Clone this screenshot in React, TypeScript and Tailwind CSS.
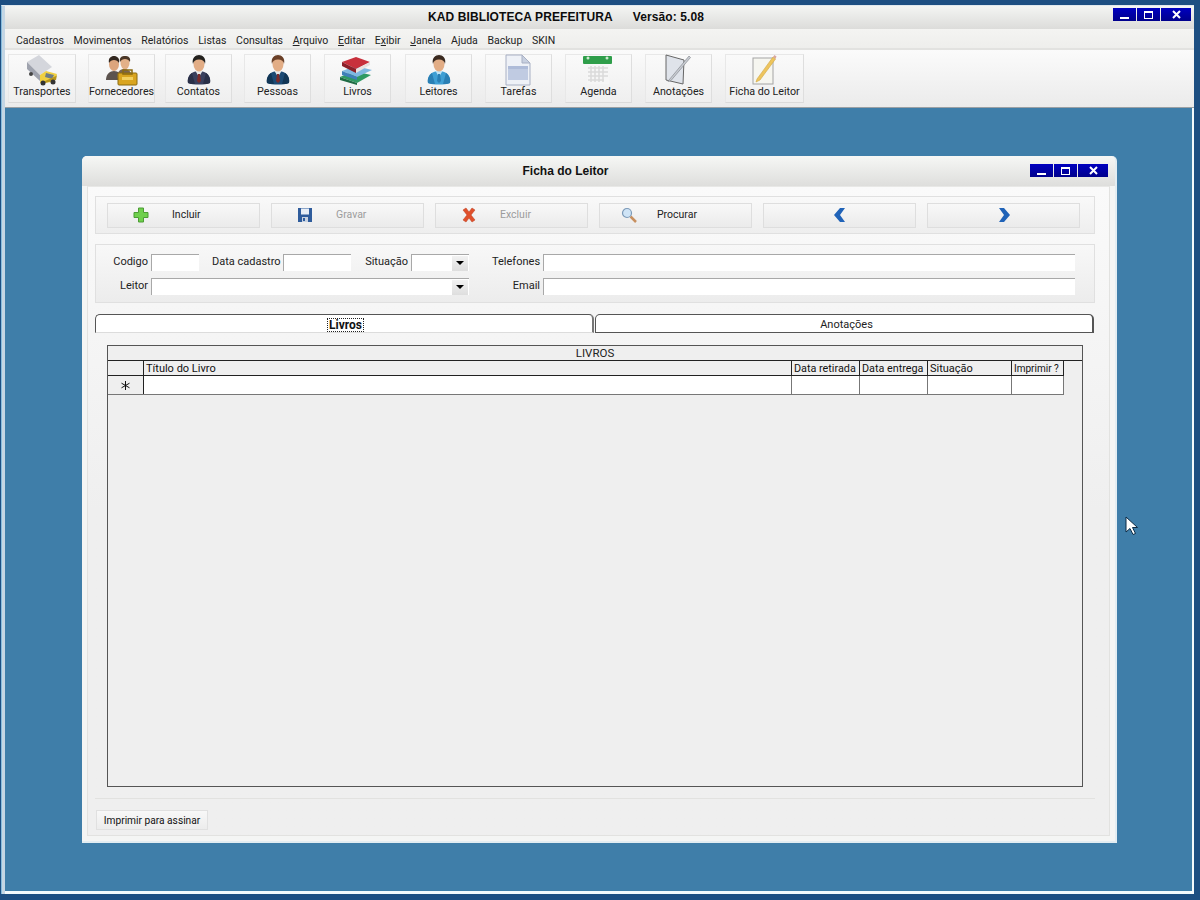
import React from 'react';

const WinButtons = () => (
  <div className="flex gap-px">
    <div className="w-[23px] h-[13px] bg-gradient-to-b from-[#0000c0] to-[#00008c] flex items-end justify-center pb-[2px]">
      <div className="w-[9px] h-[2px] bg-white" />
    </div>
    <div className="w-[23px] h-[13px] bg-gradient-to-b from-[#0000c0] to-[#00008c] flex items-center justify-center">
      <div className="w-[9px] h-[8px] border border-white border-t-2" />
    </div>
    <div className="w-[30px] h-[13px] bg-gradient-to-b from-[#0000c0] to-[#00008c] flex items-center justify-center">
      <svg width="9" height="9" viewBox="0 0 9 9">
        <path d="M1 1l7 7M8 1L1 8" stroke="#fff" strokeWidth="2" />
      </svg>
    </div>
  </div>
);

const Person = ({ suit, dark, hair, skin = '#e2ad86', collar = '#e8e8e8', tie = '#7a2a2a' }: { suit: string; dark: string; hair: string; skin?: string; collar?: string; tie?: string }) => (
  <svg width="26" height="32" viewBox="2 0 26 32">
    <path d="M4 29c-1-7 3-12 11-12s12 5 11 12c-5 2-17 2-22 0z" fill={suit} />
    <path d="M4 29c-1-4 1-8 4-10l3 11c-3 0-5 0-7-1zM26 29c1-4-1-8-4-10l-3 11c3 0 5 0 7-1z" fill={dark} />
    <path d="M11.500 17l3.500 6 3.500-6z" fill={collar} />
    <path d="M14 20h2l1 7-2 2-2-2z" fill={tie} />
    <ellipse cx="15" cy="10" rx="5.500" ry="7.500" fill={skin} />
    <path d="M9 10c-1.500-6 2.500-9 6-9s7.500 3 6 9c-.5-3-2.500-4.500-6-4.500S9.500 7 9 10z" fill={hair} />
  </svg>
);

const TruckIcon = () => (
  <svg width="34" height="32" viewBox="0 0 34 32">
    <path d="M2 8l12-7 13 12-12 8z" fill="#d4d6dc" />
    <path d="M2 8l13 13v6L2 15z" fill="#9fa3ae" />
    <path d="M15 21l6-4 11 3-3 8-14 1z" fill="#f0d040" />
    <path d="M21 19l8 2-2 4-7-2z" fill="#6f7d86" />
    <path d="M20 29l11-3 1-5-1 1-11 5z" fill="#b8961c" />
    <circle cx="18" cy="29" r="2.500" fill="#333" />
    <circle cx="28" cy="28" r="2.500" fill="#333" />
    <circle cx="6" cy="20" r="2" fill="#444" />
  </svg>
);

const SuppliersIcon = () => (
  <svg width="32" height="32" viewBox="1 0 32 32">
    <path d="M1 26c0-6 4-9 8-9s8 3 8 9z" fill="#5c534e" />
    <ellipse cx="9" cy="10" rx="5" ry="7" fill="#dca57d" />
    <path d="M4 9c-1-5 2-7 5-7s6 2 5 7c-1-2-3-3-5-3s-4 1-5 3z" fill="#332820" />
    <path d="M12 24c0-6 3-9 7-9s7 2 8 7z" fill="#7a6450" />
    <ellipse cx="20" cy="9" rx="4.500" ry="6.500" fill="#e3b088" />
    <path d="M15 8c-1-5 2-6 5-6s6 1 5 6c-1-2-3-3-5-3s-4 1-5 3z" fill="#4a3626" />
    <rect x="13" y="19" width="19" height="12" rx="1" fill="#d9a520" stroke="#8a6a10" />
    <rect x="18" y="16" width="9" height="4" fill="none" stroke="#8a6a10" strokeWidth="1.500" />
    <rect x="17" y="23" width="11" height="3" fill="#f2d060" />
  </svg>
);

const BooksIcon = () => (
  <svg width="34" height="32" viewBox="0 0 34 32" className="-ml-[3px]">
    <path d="M1 23l14-6 17 4-14 8z" fill="#2f9a63" />
    <path d="M1 23l17 6v2L1 26z" fill="#1f6b44" />
    <path d="M3 17l14-5 16 4-15 7z" fill="#7fb8e0" />
    <path d="M3 17l15 6v3L3 21z" fill="#3f7fb8" />
    <path d="M3 8l14-5 14 5-14 7z" fill="#c8303c" />
    <path d="M3 8l14 7v4L3 12z" fill="#8c1f28" />
    <path d="M17 15l14-7v3l-14 8z" fill="#e8e2e0" />
  </svg>
);

const TasksIcon = () => (
  <svg width="26" height="32" viewBox="0 0 26 32" className="-ml-[2px]">
    <path d="M1 1h16l8 8v22H1z" fill="#eef1f7" stroke="#a8b0c4" />
    <path d="M17 1v8h8z" fill="#c8d0e0" stroke="#a8b0c4" />
    <rect x="3" y="12" width="20" height="14" fill="#c0cbe2" />
    <rect x="3" y="12" width="20" height="3" fill="#aebbd8" />
  </svg>
);

const CalendarIcon = () => (
  <svg width="34" height="32" viewBox="0 0 34 32" className="-ml-[2px]">
    <rect x="2" y="2" width="29" height="8" rx="1" fill="#2f9e4a" />
    <circle cx="7" cy="4" r="1.500" fill="#cfe8d0" />
    <circle cx="26" cy="4" r="1.500" fill="#cfe8d0" />
    <rect x="6" y="11" width="22" height="19" fill="#f6f6f6" />
    <path
      d="M7 14h20M7 18h20M7 22h20M7 26h16M10 12v16M14 12v16M18 12v16M22 12v16"
      stroke="#dadada"
      strokeWidth="1.500"
    />
  </svg>
);

const NotesIcon = () => (
  <svg width="34" height="32" viewBox="0 0 34 32" className="-ml-[5px]">
    <path d="M7 1l18 5-1 24-17-4z" fill="#dfe3ea" stroke="#666" />
    <path d="M10 26L30 2l1.500 1.500L12 26.500l-3 1z" fill="#c8ccd2" stroke="#7a7e84" strokeWidth="0.600" />
  </svg>
);

const PencilNoteIcon = () => (
  <svg width="34" height="32" viewBox="0 0 34 32">
    <rect x="5" y="4" width="20" height="26" fill="#f6f6f0" stroke="#a4a4a4" />
    <path d="M9 25L25 3l2.500 2L12 26l-4 2z" fill="#eec55c" stroke="#d0a640" strokeWidth="0.600" />
    <path d="M25 3l2.500 2 1-2.500-2-1.500z" fill="#d8a8a0" />
  </svg>
);

const tools = [
  { label: 'Transportes', icon: <TruckIcon />, cls: 'w-[68px]' },
  { label: 'Fornecedores', icon: <SuppliersIcon />, cls: 'w-[67px] ml-[12px]' },
  { label: 'Contatos', icon: <Person suit="#39405e" dark="#2a3048" hair="#24221f" />, cls: 'w-[67px] ml-[10px]' },
  { label: 'Pessoas', icon: <Person suit="#1c4a74" dark="#123656" hair="#6a4028" />, cls: 'w-[67px] ml-[12px]' },
  { label: 'Livros', icon: <BooksIcon />, cls: 'w-[67px] ml-[13px]' },
  { label: 'Leitores', icon: <Person suit="#3f9fd4" dark="#2a7fb4" hair="#3a2a20" collar="#bfe3f5" tie="#2a7fb4" />, cls: 'w-[67px] ml-[14px]' },
  { label: 'Tarefas', icon: <TasksIcon />, cls: 'w-[67px] ml-[13px]' },
  { label: 'Agenda', icon: <CalendarIcon />, cls: 'w-[67px] ml-[13px]' },
  { label: 'Anotações', icon: <NotesIcon />, cls: 'w-[67px] ml-[13px]' },
  { label: 'Ficha do Leitor', icon: <PencilNoteIcon />, cls: 'w-[79px] ml-[13px]' },
];

const actions = [
  {
    label: 'Incluir',
    on: true,
    iconCls: 'ml-[25px]',
    labelCls: 'ml-[23px]',
    icon: (
      <svg width="16" height="16" viewBox="0 0 16 16">
        <path d="M5.500 1h5v4.500H15v5h-4.500V15h-5v-4.500H1v-5h4.500z" fill="#6fd04c" stroke="#4c9c34" />
      </svg>
    ),
  },
  {
    label: 'Gravar',
    on: false,
    iconCls: 'ml-[25px]',
    labelCls: 'ml-[23px]',
    icon: (
      <svg width="16" height="16" viewBox="0 0 16 16">
        <path d="M1 1h14v14H1z" fill="#2f5c9c" />
        <rect x="4" y="1.500" width="8" height="6" fill="#e8eef6" />
        <rect x="5" y="10" width="6" height="5" fill="#c8d2e0" />
        <rect x="6" y="11" width="2" height="3" fill="#2f5c9c" />
      </svg>
    ),
  },
  {
    label: 'Excluir',
    on: false,
    iconCls: 'ml-[25px]',
    labelCls: 'ml-[23px]',
    icon: (
      <svg width="16" height="16" viewBox="0 0 16 16">
        <path d="M2 3l3-2 3 4 3-4 3 2-4 5 4 5-3 2-3-4-3 4-3-2 4-5z" fill="#e0502c" stroke="#b83c1c" strokeWidth="0.500" />
      </svg>
    ),
  },
  {
    label: 'Procurar',
    on: true,
    iconCls: 'ml-[21px]',
    labelCls: 'ml-[20px]',
    icon: (
      <svg width="16" height="16" viewBox="0 0 16 16">
        <path d="M9.500 9.500L15 15" stroke="#c89060" strokeWidth="2.500" />
        <circle cx="6" cy="6" r="4.500" fill="#cfe4f6" stroke="#7c9ab8" strokeWidth="1.200" />
      </svg>
    ),
  },
];

const fieldInput = 'h-[17px] bg-white border-t border-l border-[#a8a8a8]';

const Arrow = () => (
  <div className="w-[16px] h-[15px] bg-gradient-to-b from-[#f2f2f2] to-[#dedede] flex items-center justify-center shrink-0 ml-auto mr-px">
    <div className="w-0 h-0 border-l-[4px] border-r-[4px] border-t-[4px] border-l-transparent border-r-transparent border-t-black" />
  </div>
);

const Cell = ({ w, children }: { w: string; children?: React.ReactNode }) => (
  <div className={`${w} shrink-0 pl-[2px] leading-[15px] border-r border-[#222]`}>{children}</div>
);

export default function App() {
  return (
    <div className="w-[1200px] h-[900px] overflow-hidden bg-[#1d4f82] pt-[5px] pr-[6px] pb-[6px] pl-[1px] font-['Roboto',sans-serif] text-[11px] text-[#111]">
      <div className="h-full flex flex-col bg-[#c4d6e4] pl-[3px] border-t border-[#e0e8ee] border-l border-l-[#86bbdc]">
        {/* titulo */}
        <div className="relative h-[23px] shrink-0 bg-gradient-to-b from-[#f4f5f3] to-[#dcdcda] flex items-center pl-[423px] pb-[2px]">
          <div className="flex gap-[20px] font-bold text-[12px] tracking-[0.1px] text-[#0c0c0c] font-['Liberation_Sans',sans-serif] whitespace-nowrap">
            <span>KAD BIBLIOTECA PREFEITURA</span>
            <span>Versão: 5.08</span>
          </div>
          <div className="absolute right-[3px] top-[2px]">
            <WinButtons />
          </div>
        </div>

        {/* menu */}
        <div className="h-[21px] shrink-0 bg-gradient-to-b from-[#f4f4f2] to-[#eeeeec] border-b-2 border-[#e2e2e0] flex items-center pl-[11px] pt-[4px] gap-[9.700px] text-[10.500px] text-[#222]">
          <span>Cadastros</span>
          <span>Movimentos</span>
          <span>Relatórios</span>
          <span>Listas</span>
          <span>Consultas</span>
          <span><u>A</u>rquivo</span>
          <span><u>E</u>ditar</span>
          <span>E<u>x</u>ibir</span>
          <span><u>J</u>anela</span>
          <span>Ajuda</span>
          <span>Backup</span>
          <span>SKIN</span>
        </div>

        {/* barra de icones */}
        <div className="h-[58px] shrink-0 bg-gradient-to-b from-[#fbfbfb] to-[#ebebeb] border-b border-[#9aa0a4] flex pl-[3px] pt-[4px]">
          {tools.map((t) => (
            <div
              key={t.label}
              className={`${t.cls} h-[49px] shrink-0 flex flex-col items-center bg-gradient-to-b from-[#fafafa] to-[#efefef] border border-[#e8e8e8] border-r-[#dedede] border-b-[#dadada]`}
            >
              <div className="h-[30px] flex items-center justify-center">{t.icon}</div>
              <span className="leading-[13px] whitespace-nowrap text-[10.700px] text-[#222]">{t.label}</span>
            </div>
          ))}
        </div>

        {/* area MDI */}
        <div className="relative flex-1 bg-[#3f7ea9] border-r-2 border-b-[3px] border-[#f4fafc]">
          <div className="absolute left-[77px] top-[48px] w-[1035px] h-[687px] flex flex-col rounded-t-[5px] bg-[#f4f5f4] border-b-2 border-r-2 border-[#e3edf2]">
            <div className="relative h-[30px] shrink-0 rounded-t-[5px] bg-gradient-to-b from-[#f6f7f5] to-[#dededc] flex items-center justify-center">
              <span className="font-bold text-[12px] text-[#111] ml-[-66px] font-['Liberation_Sans',sans-serif]">Ficha do Leitor</span>
              <div className="absolute right-[7px] top-[8px]">
                <WinButtons />
              </div>
            </div>

            <div className="flex-1 mx-[5px] mb-[5px] flex flex-col border border-[#e2e2e0] border-t-[#e8e8e6] bg-gradient-to-b from-[#fafafa] via-[#efefef] to-[#efefef] px-[7px] pt-[9px]">
              {/* acoes */}
              <div className="h-[38px] shrink-0 w-[1000px] border border-[#e0e0e0] bg-gradient-to-b from-[#f9f9f9] to-[#eeeeee] flex items-center pl-[11px] gap-[11px]">
                {actions.map((a) => (
                  <div
                    key={a.label}
                    className="relative w-[153px] h-[25px] shrink-0 border border-[#dedede] bg-gradient-to-b from-[#f8f8f8] to-[#ebebeb] flex items-center"
                  >
                    <div className={`${a.iconCls} w-[16px] h-[16px]`}>{a.icon}</div>
                    <span className={`${a.labelCls} text-[10.500px] ${a.on ? 'text-[#222]' : 'text-[#9c9c9c]'}`}>{a.label}</span>
                  </div>
                ))}
                <div className="w-[153px] h-[25px] shrink-0 border border-[#dedede] bg-gradient-to-b from-[#f8f8f8] to-[#ebebeb] flex items-center justify-center">
                  <svg width="12" height="14" viewBox="0 0 12 14">
                    <path d="M6 0L0 7l6 7h5L6 7l5-7z" fill="#2063b8" />
                  </svg>
                </div>
                <div className="w-[153px] h-[25px] shrink-0 border border-[#dedede] bg-gradient-to-b from-[#f8f8f8] to-[#ebebeb] flex items-center justify-center">
                  <svg width="12" height="14" viewBox="0 0 12 14">
                    <path d="M6 0l6 7-6 7H1l5-7-5-7z" fill="#2063b8" />
                  </svg>
                </div>
              </div>

              {/* campos */}
              <div className="mt-[10px] h-[59px] shrink-0 w-[1000px] border border-[#e0e0e0] bg-gradient-to-b from-[#f8f8f8] to-[#ececec] pt-[9px] text-[#222]">
                <div className="flex items-center h-[17px]">
                  <span className="w-[52px] text-right">Codigo</span>
                  <div className={`${fieldInput} w-[48px] ml-[3px]`} />
                  <span className="w-[68px] ml-[13px] text-right whitespace-nowrap">Data cadastro</span>
                  <div className={`${fieldInput} w-[68px] ml-[3px]`} />
                  <span className="w-[43px] ml-[14px] text-right">Situação</span>
                  <div className={`${fieldInput} w-[58px] ml-[3px] flex items-center`}>
                    <Arrow />
                  </div>
                  <span className="w-[48px] ml-[23px] text-right">Telefones</span>
                  <div className={`${fieldInput} w-[532px] ml-[3px]`} />
                </div>
                <div className="flex items-center h-[17px] mt-[7px]">
                  <span className="w-[52px] text-right">Leitor</span>
                  <div className={`${fieldInput} w-[318px] ml-[3px] flex items-center`}>
                    <Arrow />
                  </div>
                  <span className="w-[48px] ml-[23px] text-right">Email</span>
                  <div className={`${fieldInput} w-[532px] ml-[3px]`} />
                </div>
              </div>

              {/* abas */}
              <div className="mt-[11px] flex w-[999px] shrink-0 h-[19px]">
                <div className="w-[499px] rounded-tl-[5px] rounded-tr-[5px] bg-white border-t border-l border-[#555] border-r-2 border-r-[#777] border-b border-b-[#dcdcdc] flex items-center justify-center font-bold pt-[2px] pl-[3px] text-[12px]">
                  <span className="border border-dotted border-[#222] leading-[12px] px-px">Livros</span>
                </div>
                <div className="ml-px flex-1 rounded-t-[5px] bg-white border border-[#555] border-r-2 flex items-center justify-center text-[#222] pt-[3px] pl-[5px]">
                  Anotações
                </div>
              </div>

              {/* grade */}
              <div className="mt-[12px] ml-[12px] w-[976px] h-[442px] shrink-0 border border-[#555] bg-[#efefef]">
                <div className="h-[14px] text-center leading-[15px] text-[#222] text-[11.500px]">LIVROS</div>
                <div className="border-t border-[#222] h-[15px] flex text-[#111]">
                  <Cell w="w-[36px]" />
                  <Cell w="w-[648px]">Título do Livro</Cell>
                  <Cell w="w-[68px]"><span className="whitespace-nowrap text-[10.800px]">Data retirada</span></Cell>
                  <Cell w="w-[68px]"><span className="whitespace-nowrap text-[10.800px]">Data entrega</span></Cell>
                  <Cell w="w-[84px]">Situação</Cell>
                  <Cell w="w-[52px]"><span className="whitespace-nowrap text-[10px]">Imprimir ?</span></Cell>
                </div>
                <div className="h-[20px] w-[956px] flex border-t border-[#222] border-b border-b-[#777]">
                  <div className="w-[36px] shrink-0 border-r border-[#222] flex items-center justify-center">
                    <svg width="9" height="9" viewBox="0 0 9 9">
                      <path d="M4.500 0v9M0.500 2.200l8 4.600M8.500 2.200l-8 4.600" stroke="#111" strokeWidth="1" />
                    </svg>
                  </div>
                  <div className="w-[648px] shrink-0 bg-white border-r border-[#777]" />
                  <div className="w-[68px] shrink-0 bg-white border-r border-[#777]" />
                  <div className="w-[68px] shrink-0 bg-white border-r border-[#777]" />
                  <div className="w-[84px] shrink-0 bg-white border-r border-[#777]" />
                  <div className="w-[52px] shrink-0 bg-white border-r border-[#777]" />
                </div>
              </div>

              {/* rodape */}
              <div className="mt-[11px] w-[1000px] border-t border-[#e2e2e0] pt-[11px] pl-px">
                <div className="w-[112px] h-[20px] pt-px bg-gradient-to-b from-[#f8f8f8] to-[#ececec] border border-[#e0e0e0] flex items-center justify-center text-[10.200px] text-[#111]">
                  Imprimir para assinar
                </div>
              </div>
            </div>
          </div>

          {/* cursor */}
          <svg className="absolute left-[1120px] top-[408px]" width="14" height="20" viewBox="0 0 14 20">
            <path d="M1 1v15l4-3.500 3 6 2.500-1-3-6h5z" fill="#fff" stroke="#0c2a44" strokeWidth="1" />
          </svg>
        </div>
      </div>
    </div>
  );
}
